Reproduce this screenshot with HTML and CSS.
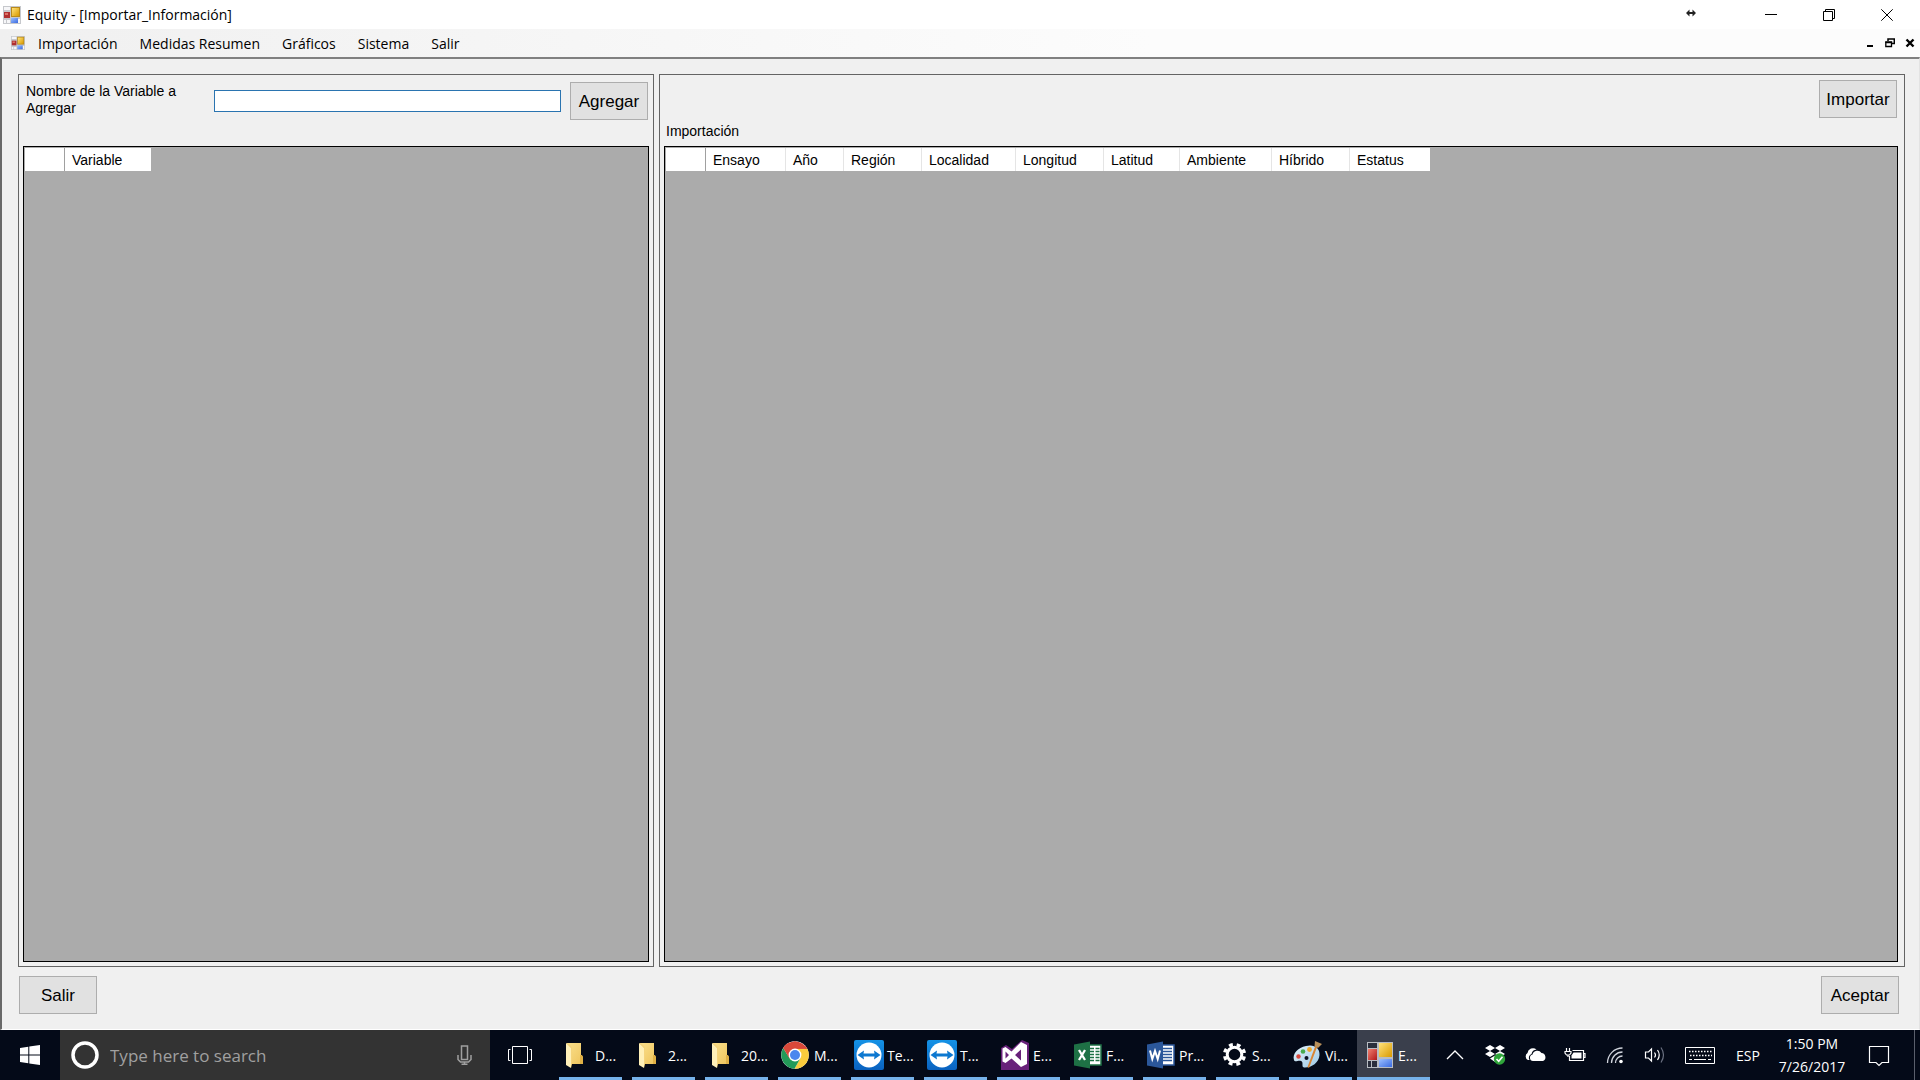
FILE: index.html
```
<!DOCTYPE html>
<html lang="es">
<head>
<meta charset="utf-8">
<title>Equity - [Importar_Información]</title>
<link rel="stylesheet" href="styles.css">
</head>
<body>
<svg class="defs" aria-hidden="true">
  <defs>
    <linearGradient id="gold" x1="0" y1="0" x2="1" y2="1"><stop offset="0" stop-color="#ffe27a"/><stop offset="1" stop-color="#d99a00"/></linearGradient>
    <linearGradient id="red" x1="0" y1="0" x2="1" y2="1"><stop offset="0" stop-color="#f08070"/><stop offset="1" stop-color="#b01818"/></linearGradient>
    <linearGradient id="blue" x1="0" y1="0" x2="1" y2="1"><stop offset="0" stop-color="#9cc0ff"/><stop offset="1" stop-color="#3a6ae0"/></linearGradient>
    <linearGradient id="tv" x1="0" y1="0" x2="0" y2="1"><stop offset="0" stop-color="#1492e6"/><stop offset="1" stop-color="#0a62c0"/></linearGradient>
    <linearGradient id="fold" x1="0" y1="0" x2="1" y2="1"><stop offset="0" stop-color="#fbe08c"/><stop offset="1" stop-color="#eec45c"/></linearGradient>
    <linearGradient id="pal" x1="0" y1="0" x2="1" y2="1"><stop offset="0" stop-color="#e4f2fa"/><stop offset="1" stop-color="#9cc8e4"/></linearGradient>
    <symbol id="form" viewBox="0 0 26 26">
      <path d="M0 0H26V26H0Z" fill="#b8bcc2"/>
      <path d="M1 1H10V6H1ZM1 19H4V25H1ZM5 19H10V25H5Z" class="form-gap"/>
      <path d="M1 7H10V18H1Z" fill="url(#red)"/>
      <path d="M12 1H25V15H12Z" fill="url(#gold)"/>
      <path d="M12 17H25V25H12Z" fill="url(#blue)"/>
    </symbol>
    <symbol id="form-small" viewBox="0 0 18 18">
      <path d="M0 0H18V18H0Z" fill="#c6c8cc"/>
      <path d="M1 1H7V4H1ZM1 14H3V17H1ZM4 14H7V17H4ZM15 13H17V17H15Z" fill="#f6f6f8"/>
      <path d="M1 6H7V12H1Z" fill="#b03030"/>
      <path d="M2 7H5V9H2Z" fill="#dc7468"/>
      <path d="M8 1H17V11H8Z" fill="#b98a1c"/>
      <path d="M9 2H16V10H9Z" fill="url(#gold)"/>
      <path d="M8 12H15V17H8Z" fill="url(#blue)"/>
    </symbol>
    <symbol id="folder" viewBox="0 0 30 30">
      <path d="M5 3H19V15L21 17V24H6Z" fill="url(#fold)"/>
      <path d="M18 15H20L21 17V24H18Z" fill="#e0b146"/>
      <path d="M4 3 9 8V28L4 25Z" fill="#fff0b8"/>
      <path d="M9 8V28L10 24V7L6 3H4Z" fill="#f5d47c"/>
    </symbol>
    <symbol id="teamviewer" viewBox="0 0 30 30">
      <rect width="30" height="30" rx="2" fill="url(#tv)"/>
      <circle cx="15" cy="15" r="12.500" fill="#fff"/>
      <path d="M3.500 15 10 10.500 9.500 13.500H20.500L20 10.500 26.500 15 20 19.500 20.500 16.500H9.500L10 19.500Z" fill="#0d78d0"/>
    </symbol>
  </defs>
</svg>

<header class="titlebar">
  <svg class="app-icon" viewBox="0 0 18 18"><use href="#form-small"/></svg>
  <h1 class="title">Equity - [Importar_Información]</h1>
  <svg class="resize-mark" viewBox="0 0 10 8"><path d="M0 4 3.500 .5V3H6.500V.5L10 4 6.500 7.500V5H3.500V7.500Z" fill="#222"/></svg>
  <div class="window-buttons">
    <button type="button" aria-label="Minimizar"><svg viewBox="0 0 12 12"><path d="M0 5.500H12"/></svg></button>
    <button type="button" aria-label="Restaurar"><svg viewBox="0 0 12 12"><path d="M.5 2.500H9.500V11.500H.5ZM2.500 2.500V.5H11.500V9.500H9.500"/></svg></button>
    <button type="button" aria-label="Cerrar"><svg viewBox="0 0 12 12"><path d="M.3 .3 11.700 11.700M11.700 .3 .3 11.700"/></svg></button>
  </div>
</header>

<nav class="menubar">
  <svg class="child-icon" viewBox="0 0 18 18"><use href="#form-small"/></svg>
  <button type="button">Importación</button>
  <button type="button">Medidas Resumen</button>
  <button type="button">Gráficos</button>
  <button type="button">Sistema</button>
  <button type="button">Salir</button>
  <div class="child-buttons">
    <button type="button" aria-label="Minimizar ventana"><svg viewBox="0 0 10 10"><path d="M2 8H8" stroke-width="2"/></svg></button>
    <button type="button" aria-label="Restaurar ventana"><svg viewBox="0 0 10 10"><path d="M3 3V1H9.300V5.500H7" stroke-width="1.500"/><path d="M.8 4.500H6.500V8.500H.8Z" stroke-width="1.300"/><path d="M.2 4H7.200" stroke-width="1.500"/></svg></button>
    <button type="button" aria-label="Cerrar ventana"><svg viewBox="0 0 10 10"><path d="M1.500 1.500 8.500 8.500M8.500 1.500 1.500 8.500" stroke-width="2.400"/></svg></button>
  </div>
</nav>

<main class="client">
  <div class="panels">
    <section class="panel panel-left">
      <div class="panel-head">
        <label for="variable">Nombre de la Variable a Agregar</label>
        <input id="variable" type="text">
        <button class="btn" type="button">Agregar</button>
      </div>
      <div class="datagrid">
        <table>
          <thead><tr><th class="corner"></th><th class="w86">Variable</th></tr></thead>
        </table>
      </div>
    </section>
    <section class="panel panel-right">
      <div class="panel-head">
        <h2>Importación</h2>
        <button class="btn" type="button">Importar</button>
      </div>
      <div class="datagrid">
        <table>
          <thead><tr><th class="corner"></th><th class="w80">Ensayo</th><th class="w58">Año</th><th class="w78">Región</th><th class="w94">Localidad</th><th class="w88">Longitud</th><th class="w76">Latitud</th><th class="w92">Ambiente</th><th class="w78">Híbrido</th><th class="w80">Estatus</th></tr></thead>
        </table>
      </div>
    </section>
  </div>
  <div class="actions">
    <button class="btn" type="button">Salir</button>
    <button class="btn" type="button">Aceptar</button>
  </div>
</main>

<footer class="taskbar">
  <button class="start" type="button" aria-label="Inicio"><svg viewBox="0 0 20 20"><path d="M0 3 8.300 1.800V9.500H0ZM9.300 1.600 20 0V9.500H9.300ZM0 10.500H8.300V18.200L0 17ZM9.300 10.500H20V20L9.300 18.400Z" fill="#fff"/></svg></button>
  <div class="search">
    <svg class="cortana" viewBox="0 0 28 28"><circle cx="14" cy="14" r="12" fill="none" stroke="#fff" stroke-width="3.500"/></svg>
    <input type="text" placeholder="Type here to search" aria-label="Search">
    <svg class="mic" viewBox="0 0 16 20"><path d="M4.500 1H10.500V14.500H4.500ZM1 10V14.500L3.500 17H11.500L14 14.500V10M7.500 17V19.500M4.500 19.300H10.500" fill="none" stroke="#a0a0a0" stroke-width="1.500"/></svg>
  </div>
  <button class="taskview" type="button" aria-label="Task view"><svg viewBox="0 0 26 20"><path d="M5.500 1.500H20.500V18.500H5.500ZM3.500 4.500H1.500V15.500H3.500M22.500 4.500H24.500V15.500H22.500" fill="none" stroke="#fff"/></svg></button>
  <div class="tasks">
    <button type="button"><svg viewBox="0 0 30 30"><use href="#folder"/></svg>D...</button>
    <button type="button"><svg viewBox="0 0 30 30"><use href="#folder"/></svg>2...</button>
    <button type="button"><svg viewBox="0 0 30 30"><use href="#folder"/></svg>20...</button>
    <button type="button"><svg viewBox="0 0 30 30"><circle cx="14" cy="15" r="13.800" fill="#fff"/><path d="M14 15 2.200 8A13.800 13.800 0 0 1 26 8.500Z" fill="#d9493a"/><path d="M14 8.700H26.300A13.800 13.800 0 0 1 13.500 28.800L19.500 18Z" fill="#fbcc3c"/><path d="M2.200 8A13.800 13.800 0 0 0 13.500 28.800L19.400 18.200 8.600 18.200Z" fill="#239a58"/><path d="M2.200 8 8.500 18.500 14 8.700H26.300L25 7 14 1.200 5 4.500Z" fill="#d9493a"/><circle cx="14" cy="15" r="6.400" fill="#fff"/><circle cx="14" cy="15" r="5" fill="#4b87ee"/></svg>M...</button>
    <button type="button"><svg viewBox="0 0 30 30"><use href="#teamviewer"/></svg>Te...</button>
    <button type="button"><svg viewBox="0 0 30 30"><use href="#teamviewer"/></svg>T...</button>
    <button type="button"><svg viewBox="0 0 30 30"><path d="M1 8 6 5 12 9 22 0 29 3V30H1Z" fill="#68217a"/><path d="M21 2 27 5V24L21 27 11.500 18.500 5.500 23 2.500 21.500V8.500L5.500 7 11.500 11.500ZM21 9.500 15 15 21 20.500ZM5.500 11.500V18.500L9 15Z" fill="#fff" fill-rule="evenodd"/></svg>E...</button>
    <button type="button"><svg viewBox="0 0 30 30"><path d="M14 5H28V25H14Z" fill="#fff" stroke="#1e7145" stroke-width="1.500"/><path d="M17 8.500H21M22.500 8.500H26.500M17 11.500H21M22.500 11.500H26.500M17 14.500H21M22.500 14.500H26.500M17 17.500H21M22.500 17.500H26.500M17 20.500H21M22.500 20.500H26.500" stroke="#1e7145" stroke-width="1.600"/><path d="M1 4.500 17 1.500V28.500L1 25.500Z" fill="#1e7145"/><path d="M6 10 12 20M12 10 6 20" stroke="#fff" stroke-width="2.300"/></svg>F...</button>
    <button type="button"><svg viewBox="0 0 30 30"><path d="M14 5H28V25H14Z" fill="#fff" stroke="#2b579a" stroke-width="1.500"/><path d="M17 8.500H26M17 11.500H26M17 14.500H26M17 17.500H26M17 20.500H26" stroke="#2b579a" stroke-width="1.500"/><path d="M1 4.500 17 1.500V28.500L1 25.500Z" fill="#2b579a"/><path d="M4 10.500 6.300 19 9 11 11.700 19 14 10.500" fill="none" stroke="#fff" stroke-width="2"/></svg>Pr...</button>
    <button type="button"><svg viewBox="0 0 30 30"><circle cx="15.500" cy="14.500" r="7.300" fill="none" stroke="#fff" stroke-width="3"/><circle cx="15.500" cy="14.500" r="9.900" fill="none" stroke="#fff" stroke-width="3.400" stroke-dasharray="3.900 3.875" stroke-dashoffset="-1.900"/></svg>S...</button>
    <button type="button"><svg viewBox="0 0 30 30"><path d="M14 6C22 4 28 8 27.500 15 27 23 19 28 12 27.500 9 27 12 22 9 21 6 20 3 23 2 20 0 14 6 7.500 14 6Z" fill="url(#pal)"/><circle cx="6.500" cy="16.500" r="2.200" fill="#d8483c"/><circle cx="11" cy="11.500" r="2.300" fill="#47ab4d"/><circle cx="17.500" cy="9.500" r="2.400" fill="#f0a92a"/><circle cx="14.500" cy="18" r="2" fill="#0b1020"/><path d="M25.500 6 17 28 15.500 27 23.500 5.500Z" fill="#d98532"/><path d="M23 1 30 4 26 8 22.500 6Z" fill="#b8905a"/></svg>Vi...</button>
    <button type="button" class="active"><svg viewBox="-2 -2 30 30"><use href="#form" width="26" height="26"/></svg>E...</button>
  </div>
  <div class="tray">
    <button type="button" aria-label="Mostrar iconos ocultos"><svg viewBox="0 0 24 24"><path d="M4 16 12 8 20 16" fill="none" stroke="#fff" stroke-width="1.300"/></svg></button>
    <button type="button" aria-label="Dropbox"><svg viewBox="0 0 24 24"><path d="M7 2 12 5 7 8 2 5ZM17 2 22 5 17 8 12 5ZM7 8 12 11 7 14 2 11ZM17 8 22 11 17 14 12 11ZM7 15.500 12 12.500 17 15.500 12 19Z" fill="#fff"/><circle cx="16.500" cy="16" r="5.700" fill="#2fa53a"/><path d="M13.500 16 15.700 18.300 19.500 13.800" fill="none" stroke="#fff" stroke-width="1.600"/></svg></button>
    <button type="button" aria-label="OneDrive"><svg viewBox="0 0 24 24"><path d="M5 17A4 4 0 0 1 4.500 10 5.500 5.500 0 0 1 13.500 6.500 5.500 5.500 0 0 0 8.500 11 4 4 0 0 0 6.500 17Z" fill="#fff"/><path d="M10 18A3.300 3.300 0 0 1 9.500 11.500 5 5 0 0 1 18.500 10 4.200 4.200 0 0 1 20 18Z" fill="#fff"/></svg></button>
    <button type="button" aria-label="Batería"><svg viewBox="0 0 24 24"><path d="M9.500 7.500H20.500V17.500H6.500V13M20.500 10.500H22V14.500H20.500" fill="none" stroke="#fff" stroke-width="1.200"/><path d="M10.500 9.500H18.500V15.500H8.500V12.500Z" fill="#fff"/><path d="M3.500 5V8M6.500 5V8M2 8.500H8V10L6.500 12H3.500L2 10ZM5 12V14" fill="none" stroke="#fff" stroke-width="1.200"/></svg></button>
    <button type="button" aria-label="Wi-Fi"><svg viewBox="0 0 24 24"><path d="M4.500 20A15 15 0 0 1 19.500 5M8.500 20A11 11 0 0 1 19.500 9M12.500 20A7 7 0 0 1 19.500 13" fill="none" stroke="#d0d4dc" stroke-width="1.300"/><circle cx="18" cy="18.500" r="1.800" fill="#fff"/></svg></button>
    <button type="button" aria-label="Volumen"><svg viewBox="0 0 24 24"><path d="M2.500 9H5.500L8.500 6V18L5.500 15H2.500Z" fill="none" stroke="#fff" stroke-width="1.200"/><path d="M11.500 9.500Q13.500 12 11.500 14.500M14.500 7Q18 12 14.500 17" fill="none" stroke="#fff" stroke-width="1.200"/><path d="M18 4.500Q23 12 18 19.500" fill="none" stroke="#6a7080" stroke-width="1.200"/></svg></button>
    <button type="button" class="keyboard" aria-label="Teclado"><svg viewBox="0 0 30 18"><path d="M.5 1.500H29.500V17.500H.5Z" fill="none" stroke="#fff"/><path d="M4 5.500H27" stroke="#fff" stroke-width="1.500" stroke-dasharray="1.500 1.500"/><path d="M5 9.500H27" stroke="#fff" stroke-width="1.500" stroke-dasharray="1.500 1.500"/><path d="M4 13.500H7M9 13.500H21M23 13.500H26" stroke="#fff"/></svg></button>
    <button type="button" class="lang">ESP</button>
    <button type="button" class="clock"><time datetime="2017-07-26T13:50">1:50 PM<br>7/26/2017</time></button>
    <button type="button" class="notify" aria-label="Notificaciones"><svg viewBox="0 0 24 24"><path d="M2.500 3.500H21.500V19.500H15L12 22.500 9 19.500H2.500Z" fill="none" stroke="#fff" stroke-width="1.200"/></svg></button>
    <button type="button" class="desktop" aria-label="Mostrar escritorio"></button>
  </div>
</footer>
</body>
</html>
```
FILE: styles.css
```
* { box-sizing: border-box; }

body {
  margin: 0;
  min-height: 100vh;
  display: flex;
  flex-direction: column;
  background: #f0f0f0;
  color: #000;
  font-family: "Open Sans", "Noto Sans", sans-serif;
  font-size: 14px;
}

button {
  margin: 0;
  padding: 0;
  border: 0;
  background: none;
  color: inherit;
  font: inherit;
}

svg { display: block; flex: none; }
.defs { position: absolute; width: 0; height: 0; }

h1, h2 { margin: 0; font-weight: 400; }

.form-gap { fill: #2a2e3c; }

/* Title bar */
.titlebar {
  display: flex;
  align-items: center;
  height: 29px;
  padding: 0 4px 0 3px;
  background: #fff;
}
.app-icon { width: 18px; height: 18px; }
.title { margin-left: 6px; font-size: 14px; line-height: 20px; }
.resize-mark { width: 12px; height: 8px; margin: 0 45px 4px auto; }
.window-buttons { display: flex; }
.window-buttons button {
  width: 58px;
  height: 29px;
  display: flex;
  align-items: center;
  justify-content: center;
}
.window-buttons svg { width: 12px; height: 12px; }
.window-buttons path { fill: none; stroke: #000; }

/* Menu bar */
.menubar {
  display: flex;
  align-items: center;
  height: 28px;
  padding: 0 5px 0 11px;
  background: linear-gradient(to right, #f0f0f0, #fcfcfc 60%);
}
.child-icon { width: 14px; height: 14px; margin-right: 2px; }
.menubar > button { padding: 2px 11px 0; line-height: 26px; }
.child-buttons { display: flex; gap: 10px; margin-left: auto; }
.child-buttons svg { width: 10px; height: 10px; }
.child-buttons path { fill: none; stroke: #000; }

/* Client area */
.client {
  flex: 1;
  display: flex;
  flex-direction: column;
  padding: 15px 14px 15px 16px;
  border: 2px solid #696969;
  border-top-color: #808080;
  border-right: 1px solid #e3e3e3;
  border-bottom: 1px solid #fff;
  font-family: "Liberation Sans", Arial, sans-serif;
}
.panels {
  flex: 1;
  display: grid;
  grid-template-columns: 636fr 1246fr;
  gap: 5px;
}
.panel {
  display: flex;
  flex-direction: column;
  padding: 0 4px 4px;
  border: 1px solid #646464;
}
.panel-right { padding-right: 6px; }
.panel-head { display: flex; height: 71px; }
.panel-head label {
  width: 160px;
  margin: 8px 28px 0 3px;
  line-height: 17px;
}
.panel-head input {
  flex: 1;
  min-width: 0;
  height: 22px;
  margin: 15px 9px 0 0;
  padding: 2px 4px;
  border: 1px solid #2a74b0;
  outline: 0;
  background: #fff;
  font: inherit;
}
.panel-head .btn { margin: 7px 1px 0 0; }
.panel-right .btn { margin-top: 5px; }
.panel-head h2 {
  flex: 1;
  align-self: flex-end;
  padding: 0 0 6px 2px;
  font-size: 14px;
  line-height: 17px;
}
.btn {
  width: 78px;
  height: 38px;
  padding-top: 2px;
  border: 1px solid #adadad;
  background: #e1e1e1;
  font-family: "Liberation Sans", Arial, sans-serif;
  font-size: 17px;
}
.datagrid {
  flex: 1;
  padding: 1px;
  border: 1px solid #000;
  background: #ababab;
}
.datagrid table { border-collapse: separate; border-spacing: 0; table-layout: fixed; width: 1px; }
.datagrid th {
  height: 23px;
  padding: 0 0 0 7px;
  border-right: 1px solid #e5e5e5;
  background: #fff;
  font-weight: 400;
  line-height: 22px;
  text-align: left;
}
.datagrid th:last-child { border-right: 0; }
.datagrid .corner { width: 40px; border-right-color: #a0a0a0; }
.w58 { width: 58px; }
.w76 { width: 76px; }
.w78 { width: 78px; }
.w80 { width: 80px; }
.w86 { width: 86px; }
.w88 { width: 88px; }
.w92 { width: 92px; }
.w94 { width: 94px; }
.actions {
  display: flex;
  justify-content: space-between;
  padding: 9px 6px 0 1px;
}

/* Taskbar */
.taskbar {
  display: flex;
  align-items: stretch;
  height: 50px;
  background: #040a18;
  color: #fff;
}
.taskbar button {
  display: flex;
  align-items: center;
  justify-content: center;
}
.start { width: 60px; }
.start svg { width: 20px; height: 20px; }
.search {
  width: 430px;
  display: flex;
  align-items: center;
  padding: 0 17px 0 11px;
  background: #333;
}
.cortana { width: 28px; height: 28px; }
.search input {
  flex: 1;
  min-width: 0;
  padding: 0 11px;
  border: 0;
  outline: 0;
  background: none;
  color: #fff;
  font: inherit;
  font-size: 17px;
}
.search input::placeholder { color: #a0a0a0; opacity: 1; }
.mic { width: 16px; height: 20px; }
.taskview { width: 64px; padding-right: 4px; }
.taskview svg { width: 26px; height: 20px; }
.tasks { display: flex; }
.tasks button {
  position: relative;
  width: 73px;
  padding-left: 8px;
  gap: 3px;
  justify-content: flex-start;
  white-space: nowrap;
}
.tasks svg { width: 30px; height: 30px; }
.tasks button::after {
  content: "";
  position: absolute;
  left: 5px;
  right: 5px;
  bottom: 0;
  height: 3px;
  background: #76b2ea;
}
.tasks .active { background: #3a3f4c; }
.tasks .active::after { left: 0; right: 0; }
.tray { display: flex; margin-left: auto; }
.tray button { width: 40px; }
.tray svg { width: 24px; height: 24px; }
.tray .keyboard { width: 50px; }
.tray .keyboard svg { width: 30px; height: 18px; }
.tray .lang { width: 46px; }
.tray .clock { width: 82px; line-height: 23px; text-align: center; }
.tray .notify { width: 52px; margin-right: 9px; }
.tray .desktop { width: 6px; border-left: 1px solid #5a5f6c; }
```
